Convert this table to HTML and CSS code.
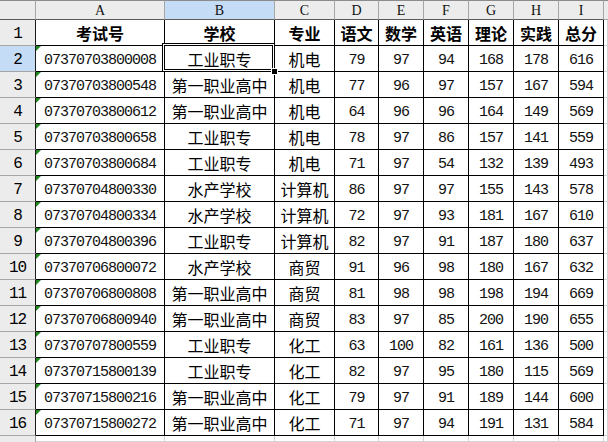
FILE: index.html
```html
<!DOCTYPE html>
<html lang="zh">
<head>
<meta charset="utf-8">
<title>成绩表</title>
<link rel="stylesheet" href="styles.css">
</head>
<body>
<div class="sheet">
  <div class="ch corner"></div>
  <div class="ch">A</div>
  <div class="ch sel">B</div>
  <div class="ch">C</div>
  <div class="ch">D</div>
  <div class="ch">E</div>
  <div class="ch">F</div>
  <div class="ch">G</div>
  <div class="ch">H</div>
  <div class="ch">I</div>
  <div class="ch last"></div>

  <div class="rh">1</div>
  <div class="c t b">考试号</div><div class="c t b">学校</div><div class="c t b">专业</div><div class="c t b">语文</div><div class="c t b">数学</div><div class="c t b">英语</div><div class="c t b">理论</div><div class="c t b">实践</div><div class="c t b">总分</div><div class="g"></div>

  <div class="rh sel">2</div>
  <div class="c n tri">07370703800008</div><div class="c t active">工业职专<span class="frame"><span class="handle"></span></span></div><div class="c t">机电</div><div class="c n">79</div><div class="c n">97</div><div class="c n">94</div><div class="c n">168</div><div class="c n">178</div><div class="c n">616</div><div class="g"></div>

  <div class="rh">3</div>
  <div class="c n tri">07370703800548</div><div class="c t">第一职业高中</div><div class="c t">机电</div><div class="c n">77</div><div class="c n">96</div><div class="c n">97</div><div class="c n">157</div><div class="c n">167</div><div class="c n">594</div><div class="g"></div>

  <div class="rh">4</div>
  <div class="c n tri">07370703800612</div><div class="c t">第一职业高中</div><div class="c t">机电</div><div class="c n">64</div><div class="c n">96</div><div class="c n">96</div><div class="c n">164</div><div class="c n">149</div><div class="c n">569</div><div class="g"></div>

  <div class="rh">5</div>
  <div class="c n tri">07370703800658</div><div class="c t">工业职专</div><div class="c t">机电</div><div class="c n">78</div><div class="c n">97</div><div class="c n">86</div><div class="c n">157</div><div class="c n">141</div><div class="c n">559</div><div class="g"></div>

  <div class="rh">6</div>
  <div class="c n tri">07370703800684</div><div class="c t">工业职专</div><div class="c t">机电</div><div class="c n">71</div><div class="c n">97</div><div class="c n">54</div><div class="c n">132</div><div class="c n">139</div><div class="c n">493</div><div class="g"></div>

  <div class="rh">7</div>
  <div class="c n tri">07370704800330</div><div class="c t">水产学校</div><div class="c t">计算机</div><div class="c n">86</div><div class="c n">97</div><div class="c n">97</div><div class="c n">155</div><div class="c n">143</div><div class="c n">578</div><div class="g"></div>

  <div class="rh">8</div>
  <div class="c n tri">07370704800334</div><div class="c t">水产学校</div><div class="c t">计算机</div><div class="c n">72</div><div class="c n">97</div><div class="c n">93</div><div class="c n">181</div><div class="c n">167</div><div class="c n">610</div><div class="g"></div>

  <div class="rh">9</div>
  <div class="c n tri">07370704800396</div><div class="c t">工业职专</div><div class="c t">计算机</div><div class="c n">82</div><div class="c n">97</div><div class="c n">91</div><div class="c n">187</div><div class="c n">180</div><div class="c n">637</div><div class="g"></div>

  <div class="rh">10</div>
  <div class="c n tri">07370706800072</div><div class="c t">水产学校</div><div class="c t">商贸</div><div class="c n">91</div><div class="c n">96</div><div class="c n">98</div><div class="c n">180</div><div class="c n">167</div><div class="c n">632</div><div class="g"></div>

  <div class="rh">11</div>
  <div class="c n tri">07370706800808</div><div class="c t">第一职业高中</div><div class="c t">商贸</div><div class="c n">81</div><div class="c n">98</div><div class="c n">98</div><div class="c n">198</div><div class="c n">194</div><div class="c n">669</div><div class="g"></div>

  <div class="rh">12</div>
  <div class="c n tri">07370706800940</div><div class="c t">第一职业高中</div><div class="c t">商贸</div><div class="c n">83</div><div class="c n">97</div><div class="c n">85</div><div class="c n">200</div><div class="c n">190</div><div class="c n">655</div><div class="g"></div>

  <div class="rh">13</div>
  <div class="c n tri">07370707800559</div><div class="c t">工业职专</div><div class="c t">化工</div><div class="c n">63</div><div class="c n">100</div><div class="c n">82</div><div class="c n">161</div><div class="c n">136</div><div class="c n">500</div><div class="g"></div>

  <div class="rh">14</div>
  <div class="c n tri">07370715800139</div><div class="c t">工业职专</div><div class="c t">化工</div><div class="c n">82</div><div class="c n">97</div><div class="c n">95</div><div class="c n">180</div><div class="c n">115</div><div class="c n">569</div><div class="g"></div>

  <div class="rh">15</div>
  <div class="c n tri">07370715800216</div><div class="c t">第一职业高中</div><div class="c t">化工</div><div class="c n">79</div><div class="c n">97</div><div class="c n">91</div><div class="c n">189</div><div class="c n">144</div><div class="c n">600</div><div class="g"></div>

  <div class="rh">16</div>
  <div class="c n tri">07370715800272</div><div class="c t">第一职业高中</div><div class="c t">化工</div><div class="c n">71</div><div class="c n">97</div><div class="c n">94</div><div class="c n">191</div><div class="c n">131</div><div class="c n">584</div><div class="g"></div>

  <div class="rh rlast"></div>
  <div class="g"></div><div class="g"></div><div class="g"></div><div class="g"></div><div class="g"></div><div class="g"></div><div class="g"></div><div class="g"></div><div class="g"></div><div class="g"></div>
</div>
</body>
</html>
```

FILE: styles.css
```css
html, body {
  margin: 0;
  padding: 0;
  background: #ffffff;
  overflow: hidden;
}

.sheet {
  display: grid;
  grid-template-columns: 36px 129px 110px 60px 44px 45px 45px 45px 45px 45px 1fr;
  grid-template-rows: 20px repeat(16, 26px) 1fr;
  width: 608px;
  height: 442px;
}

.sheet > div {
  box-sizing: border-box;
  display: flex;
  align-items: center;
  justify-content: center;
  white-space: nowrap;
}

.ch {
  background: #ececec;
  border-top: 1px solid #8c8c8c;
  border-right: 1px solid #a6a6a6;
  border-bottom: 1px solid #5a5a5a;
  font-family: "Liberation Serif", serif;
  font-size: 14px;
  color: #111;
  padding-top: 1px;
}

.ch.sel,
.rh.sel {
  background: #c5dcf6;
}

.ch.last {
  border-right: none;
  border-bottom-color: #a6a6a6;
}

.rh {
  background: #ececec;
  border-right: 1px solid #1a1a1a;
  border-bottom: 1px solid #a6a6a6;
  font-family: "Liberation Mono", monospace;
  font-size: 16px;
  letter-spacing: -1px;
  color: #000;
  padding-top: 2px;
}

.rh.rlast {
  border-right-color: #a6a6a6;
  border-bottom: none;
}

.c {
  border-right: 1px solid #000;
  border-bottom: 1px solid #000;
  color: #000;
  position: relative;
}

.g {
  border-right: 1px solid #d4d4d4;
  border-bottom: 1px solid #d4d4d4;
}

.t {
  font-family: "Noto Sans CJK SC", sans-serif;
  font-size: 16px;
  padding-top: 1px;
}

.t.b {
  font-weight: 700;
  padding-top: 0;
}

.n {
  font-family: "Liberation Mono", monospace;
  font-size: 15px;
  letter-spacing: -1px;
  padding-top: 3px;
  color: #111;
}

.tri::before {
  content: "";
  position: absolute;
  left: 0;
  top: 0;
  border-top: 5px solid #1f8a1f;
  border-right: 5px solid transparent;
}

.active {
  position: relative;
}

.frame {
  position: absolute;
  left: -3px;
  top: -3px;
  width: 113px;
  height: 29px;
  box-sizing: border-box;
  border: 1px solid #000;
  box-shadow: inset 0 0 0 1px #fff, inset 0 0 0 2px #000;
  z-index: 2;
}

.handle {
  position: absolute;
  right: -4px;
  bottom: -4px;
  width: 7px;
  height: 7px;
  box-sizing: border-box;
  background: #000;
  border: 1px solid #fff;
}
```
